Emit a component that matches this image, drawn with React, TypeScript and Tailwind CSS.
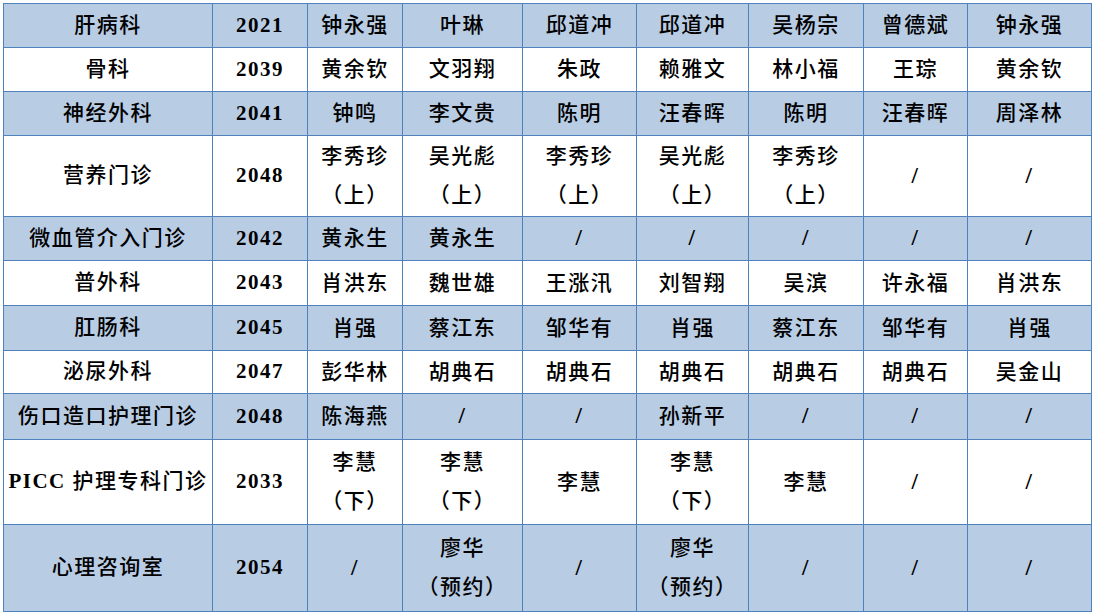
const cols = [209, 95, 95, 120, 114, 112, 115, 104, 124]

type Row = { dept: string; room: string; h: number; cells: string[][] }

const rows: Row[] = [
  { dept: '肝病科', room: '2021', h: 44, cells: [['钟永强'], ['叶琳'], ['邱道冲'], ['邱道冲'], ['吴杨宗'], ['曾德斌'], ['钟永强']] },
  { dept: '骨科', room: '2039', h: 44, cells: [['黄余钦'], ['文羽翔'], ['朱政'], ['赖雅文'], ['林小福'], ['王琮'], ['黄余钦']] },
  { dept: '神经外科', room: '2041', h: 44, cells: [['钟鸣'], ['李文贵'], ['陈明'], ['汪春晖'], ['陈明'], ['汪春晖'], ['周泽林']] },
  {
    dept: '营养门诊', room: '2048', h: 81,
    cells: [['李秀珍', '（上）'], ['吴光彪', '（上）'], ['李秀珍', '（上）'], ['吴光彪', '（上）'], ['李秀珍', '（上）'], ['/'], ['/']],
  },
  { dept: '微血管介入门诊', room: '2042', h: 44, cells: [['黄永生'], ['黄永生'], ['/'], ['/'], ['/'], ['/'], ['/']] },
  { dept: '普外科', room: '2043', h: 45, cells: [['肖洪东'], ['魏世雄'], ['王涨汛'], ['刘智翔'], ['吴滨'], ['许永福'], ['肖洪东']] },
  { dept: '肛肠科', room: '2045', h: 45, cells: [['肖强'], ['蔡江东'], ['邹华有'], ['肖强'], ['蔡江东'], ['邹华有'], ['肖强']] },
  { dept: '泌尿外科', room: '2047', h: 43, cells: [['彭华林'], ['胡典石'], ['胡典石'], ['胡典石'], ['胡典石'], ['胡典石'], ['吴金山']] },
  { dept: '伤口造口护理门诊', room: '2048', h: 46, cells: [['陈海燕'], ['/'], ['/'], ['孙新平'], ['/'], ['/'], ['/']] },
  {
    dept: 'PICC 护理专科门诊', room: '2033', h: 85,
    cells: [['李慧', '（下）'], ['李慧', '（下）'], ['李慧'], ['李慧', '（下）'], ['李慧'], ['/'], ['/']],
  },
  {
    dept: '心理咨询室', room: '2054', h: 87,
    cells: [['/'], ['廖华', '（预约）'], ['/'], ['廖华', '（预约）'], ['/'], ['/'], ['/']],
  },
]

function Cell({ lines }: { lines: string[] }) {
  if (lines.length === 1 && lines[0] === '/') {
    return <span className="font-bold text-[23px]">/</span>
  }
  return (
    <div className="flex flex-col items-center leading-[39px]">
      {lines.map((l, i) => (
        <span key={i}>{l}</span>
      ))}
    </div>
  )
}

function Dept({ name }: { name: string }) {
  if (name.startsWith('PICC')) {
    return (
      <>
        <span className="font-bold">PICC</span>
        {name.slice(4)}
      </>
    )
  }
  return <>{name}</>
}

export default function App() {
  return (
    <div className="w-[1095px] h-[615px] bg-white pl-[3px] pt-[3px]">
      <table
        className="table-fixed border-collapse w-[1088px] text-black text-[21px] tracking-[1.5px] font-medium"
        style={{ fontFamily: '"Liberation Serif", "Noto Sans CJK SC", serif' }}
      >
        <colgroup>
          {cols.map((w, i) => (
            <col key={i} style={{ width: w }} />
          ))}
        </colgroup>
        <tbody>
          {rows.map((r, i) => (
            <tr key={i} className={i % 2 === 0 ? 'bg-[#b8cce4]' : 'bg-white'} style={{ height: r.h }}>
              <td className="border border-[#4f81bd] text-center p-0">
                <Dept name={r.dept} />
              </td>
              <td className="border border-[#4f81bd] text-center p-0 font-bold">{r.room}</td>
              {r.cells.map((c, j) => (
                <td key={j} className="border border-[#4f81bd] text-center p-0">
                  <Cell lines={c} />
                </td>
              ))}
            </tr>
          ))}
        </tbody>
      </table>
    </div>
  )
}
